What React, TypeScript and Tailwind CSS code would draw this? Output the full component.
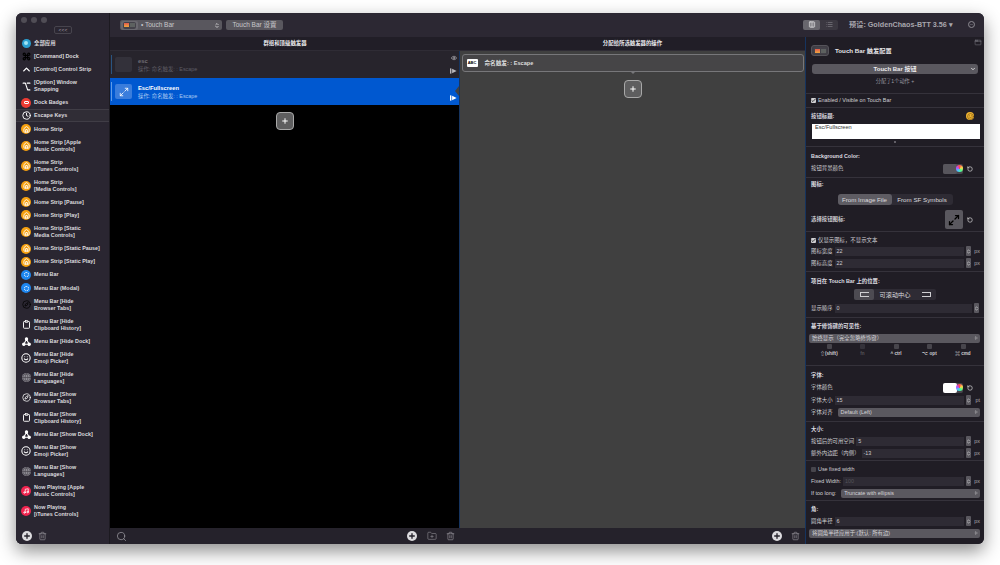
import type { ReactNode } from 'react';
import { Command, ChevronUp, Option, Clock, Home, Compass, Clipboard, Smile, Globe, Music, Plus, Trash2, Search, FolderPlus, Eye, Maximize2, RotateCcw, ChevronsUpDown, ChevronDown, Columns3, List, Minus, Check, AppWindow } from 'lucide-react';

const FONT = 'font-["Liberation_Sans","Noto_Sans_CJK_SC",sans-serif]';

type SideItem = { label: string[]; icon: ReactNode };

const homeIcon = (
  <span className="w-[10px] h-[10px] rounded-full bg-[#f5a00f] flex items-center justify-center">
    <Home className="w-[7px] h-[7px] text-white" strokeWidth={3} />
  </span>
);
const menuIcon = (
  <span className="w-[10px] h-[10px] rounded-full bg-[#1e87f0] flex items-center justify-center">
    <span className="w-[5px] h-[5px] rounded-full border border-dotted border-white" />
  </span>
);
const musicIcon = (
  <span className="w-[10px] h-[10px] rounded-full bg-[#f0244f] flex items-center justify-center">
    <Music className="w-[6px] h-[6px] text-white" strokeWidth={3} />
  </span>
);
const mono = (node: ReactNode) => <span className="text-white flex items-center justify-center">{node}</span>;
const dockIcon = (
  <svg viewBox="0 0 10 10" className="w-[9px] h-[9px]" fill="none" stroke="white" strokeWidth="1.2">
    <path d="M5 2.5 L2 8 M5 2.5 L8 8 M2 8 H8" />
    <circle cx="5" cy="2.2" r="1.3" fill="white" />
    <circle cx="2" cy="8" r="1.3" fill="white" />
    <circle cx="8" cy="8" r="1.3" fill="white" />
  </svg>
);
const langIcon = (
  <span className="w-[9px] h-[9px] rounded-full bg-[#8f8d94] flex items-center justify-center text-[#3a3840]">
    <Globe className="w-[9px] h-[9px]" strokeWidth={1.5} />
  </span>
);

const SIDE_ITEMS: SideItem[] = [
  {
    label: ['全部应用'],
    icon: (
      <span className="w-[9px] h-[9px] rounded-full bg-[#2a9fd0] flex items-center justify-center">
        <span className="w-[4px] h-[4px] rounded-full bg-[#9fe6f5]" />
      </span>
    ),
  },
  { label: ['[Command] Dock'], icon: <span className="text-black flex"><Command className="w-[9px] h-[9px]" strokeWidth={3} /></span> },
  { label: ['[Control] Control Strip'], icon: mono(<ChevronUp className="w-[11px] h-[11px]" strokeWidth={3} />) },
  { label: ['[Option] Window', 'Snapping'], icon: mono(<Option className="w-[9px] h-[9px]" strokeWidth={3} />) },
  {
    label: ['Dock Badges'],
    icon: (
      <span className="w-[10px] h-[10px] rounded-full bg-[#ee3b33] flex items-center justify-center">
        <span className="w-[5px] h-[3.5px] border border-white rounded-[1px]" />
      </span>
    ),
  },
  { label: ['Escape Keys'], icon: mono(<Clock className="w-[9px] h-[9px]" strokeWidth={2.5} />) },
  { label: ['Home Strip'], icon: homeIcon },
  { label: ['Home Strip [Apple', 'Music Controls]'], icon: homeIcon },
  { label: ['Home Strip', '[iTunes Controls]'], icon: homeIcon },
  { label: ['Home Strip', '[Media Controls]'], icon: homeIcon },
  { label: ['Home Strip [Pause]'], icon: homeIcon },
  { label: ['Home Strip [Play]'], icon: homeIcon },
  { label: ['Home Strip [Static', 'Media Controls]'], icon: homeIcon },
  { label: ['Home Strip [Static Pause]'], icon: homeIcon },
  { label: ['Home Strip [Static Play]'], icon: homeIcon },
  { label: ['Menu Bar'], icon: menuIcon },
  { label: ['Menu Bar (Modal)'], icon: menuIcon },
  { label: ['Menu Bar [Hide', 'Browser Tabs]'], icon: <span className="text-black flex"><Compass className="w-[9px] h-[9px]" strokeWidth={2} /></span> },
  { label: ['Menu Bar [Hide', 'Clipboard History]'], icon: mono(<Clipboard className="w-[9px] h-[9px]" strokeWidth={2.5} />) },
  { label: ['Menu Bar [Hide Dock]'], icon: dockIcon },
  { label: ['Menu Bar [Hide', 'Emoji Picker]'], icon: mono(<Smile className="w-[10px] h-[10px]" strokeWidth={2.5} />) },
  { label: ['Menu Bar [Hide', 'Languages]'], icon: langIcon },
  { label: ['Menu Bar [Show', 'Browser Tabs]'], icon: mono(<Compass className="w-[9px] h-[9px]" strokeWidth={2} />) },
  { label: ['Menu Bar [Show', 'Clipboard History]'], icon: mono(<Clipboard className="w-[9px] h-[9px]" strokeWidth={2.5} />) },
  { label: ['Menu Bar [Show Dock]'], icon: dockIcon },
  { label: ['Menu Bar [Show', 'Emoji Picker]'], icon: mono(<Smile className="w-[10px] h-[10px]" strokeWidth={2.5} />) },
  { label: ['Menu Bar [Show', 'Languages]'], icon: langIcon },
  { label: ['Now Playing [Apple', 'Music Controls]'], icon: musicIcon },
  { label: ['Now Playing', '[iTunes Controls]'], icon: musicIcon },
];

function SideRow({ item }: { item: SideItem }) {
  const active = item.label[0] === 'Escape Keys';
  const double = item.label.length > 1;
  return (
    <div className={`flex items-center gap-[3px] pl-[5px] shrink-0 ${double ? 'h-[20px]' : 'h-[13.2px]'} ${active ? 'bg-[#302d36] border-y border-[#403d46]' : ''}`}>
      <span className="w-[10px] flex justify-center shrink-0">{item.icon}</span>
      <div className="text-[5.4px] leading-[7px] font-bold text-[#dcdbdf] whitespace-nowrap">
        {item.label.map((l) => (
          <div key={l}>{l}</div>
        ))}
      </div>
    </div>
  );
}

function Sidebar() {
  return (
    <div className="w-[94px] shrink-0 bg-[#2a2631] flex flex-col border-r border-[#1c1a20] relative">
      <div className="absolute left-[5px] top-[4px] flex gap-[4px]">
        <span className="w-[6px] h-[6px] rounded-full bg-[#504d55]" />
        <span className="w-[6px] h-[6px] rounded-full bg-[#504d55]" />
        <span className="w-[6px] h-[6px] rounded-full bg-[#504d55]" />
      </div>
      <div className="absolute left-[38px] top-[13px] w-[18px] h-[8px] rounded-[2px] border border-[#47444d] text-[5px] leading-[6px] text-center text-[#a09ea6]">
        {'<<<'}
      </div>
      <div className="flex-1 min-h-0 overflow-hidden pt-[23.5px]">
        {SIDE_ITEMS.map((item) => (
          <SideRow key={item.label.join(' ')} item={item} />
        ))}
      </div>
      <div className="h-[17px] shrink-0 flex items-center gap-[6px] pl-[6px] bg-[#2a2631]">
        <PlusDisc />
        <Trash2 className="w-[9px] h-[10px] text-[#a5a3a9]" strokeWidth={1.5} />
      </div>
    </div>
  );
}

function PlusDisc() {
  return (
    <span className="w-[10px] h-[10px] rounded-full bg-[#dddcdf] flex items-center justify-center">
      <Plus className="w-[8px] h-[8px] text-[#25222b]" strokeWidth={4} />
    </span>
  );
}

function AddButton() {
  return (
    <div className="w-[18px] h-[18px] rounded-[4px] bg-[#5e5e5f] border border-[#a8a8a8] flex items-center justify-center">
      <Plus className="w-[8px] h-[8px] text-white" strokeWidth={3} />
    </div>
  );
}

function TouchBarThumb() {
  return (
    <span className="w-[13px] h-[7px] rounded-[2px] bg-[#44424a] flex items-center gap-[1px] px-[1px]">
      <span className="w-[5px] h-[4px] bg-gradient-to-b from-[#e2574c] to-[#eda73c]" />
      <span className="w-[5px] h-[4px] bg-[#5d6160]" />
    </span>
  );
}

function Toolbar() {
  return (
    <div className="h-[24px] shrink-0 flex items-center bg-[#2c2833]">
      <div className="ml-[10px] w-[102px] h-[10px] rounded-[2px] bg-[#59575e] flex items-center text-[6.5px] text-[#c8c7cb]">
        <span className="w-[17px] h-[9px] ml-[1px] rounded-[2px] bg-[#6a686f] flex items-center justify-center">
          <TouchBarThumb />
        </span>
        <span className="ml-[3px] flex-1">• Touch Bar</span>
        <ChevronsUpDown className="w-[6px] h-[7px] mr-[2px] text-white" strokeWidth={2.5} />
      </div>
      <div className="ml-[4px] w-[57px] h-[10px] rounded-[2px] bg-[#59575e] text-[6.5px] leading-[10px] text-center text-[#c8c7cb]">
        Touch Bar 设置
      </div>
      <div className="ml-auto flex items-center">
        <div className="w-[35px] h-[10px] rounded-[2px] bg-[#3b3841] flex items-center">
          <span className="w-[17px] h-[10px] rounded-[2px] bg-[#68666d] flex items-center justify-center text-white">
            <Columns3 className="w-[8px] h-[7px]" strokeWidth={2} />
          </span>
          <span className="flex-1 flex justify-center text-[#8a888f]">
            <List className="w-[7px] h-[7px]" strokeWidth={2} />
          </span>
        </div>
        <span className="ml-[11px] mr-[15px] w-[104px] text-[7.2px] font-semibold text-[#a8a6ad] whitespace-nowrap">预设: GoldenChaos-BTT 3.56 ▾</span>
        <span className="mr-[9px] w-[7px] h-[7px] rounded-full border border-[#8d8b92] flex items-center justify-center text-[#8d8b92]">
          <Minus className="w-[5px] h-[5px]" strokeWidth={2} />
        </span>
      </div>
    </div>
  );
}

function DragGlyph({ className }: { className: string }) {
  return (
    <svg viewBox="0 0 8 6" className={`w-[7px] h-[6px] ${className}`} fill="currentColor">
      <rect x="0" y="0" width="1.6" height="6" />
      <path d="M2.4 0.4 L7.6 3 L2.4 5.6 Z" />
    </svg>
  );
}

function TriggerRow({ selected, title, sub }: { selected?: boolean; title: string; sub: string }) {
  return (
    <div className={`h-[27px] shrink-0 flex items-center relative ${selected ? 'bg-[#0058d0]' : 'bg-[#27242c]'}`}>
      <span className={`ml-[1px] w-[1px] h-[19px] ${selected ? 'bg-[#5d9be8]' : 'bg-[#2a5480]'}`} />
      <span className={`ml-[3px] w-[17px] h-[15px] rounded-[2px] flex items-center justify-center ${selected ? 'bg-[#3a7ddc]' : 'bg-[#33313a]'}`}>
        {selected && <Maximize2 className="w-[10px] h-[10px] text-white" strokeWidth={2} />}
      </span>
      <div className="ml-[6px]">
        <div className={`text-[5.8px] leading-[8px] font-bold ${selected ? 'text-white' : 'text-[#6f6d75]'}`}>{title}</div>
        <div className={`mt-[1px] text-[5.4px] leading-[7px] ${selected ? 'text-[#a9c8f2]' : 'text-[#5f5d65]'}`}>{sub}</div>
      </div>
      <div className="ml-auto mr-[2px] h-full flex flex-col items-center justify-between py-[4px] text-[#b8b7bb]">
        {selected ? <span className="h-[6px]" /> : <Eye className="w-[6px] h-[6px]" strokeWidth={2.5} />}
        <DragGlyph className={selected ? 'text-white' : 'text-[#b8b7bb]'} />
      </div>
      {selected && <span className="absolute right-0 top-[8px] w-0 h-0 border-y-[5px] border-y-transparent border-r-[4px] border-r-[#404040]" />}
    </div>
  );
}

function ColumnHeader({ children }: { children: ReactNode }) {
  return (
    <div className="h-[14px] shrink-0 bg-[#211e27] border-b border-[#2f2c35] text-center text-[5.4px] leading-[13px] font-bold text-[#ecebee]">
      {children}
    </div>
  );
}

function TriggerColumn() {
  return (
    <div className="w-[350px] shrink-0 flex flex-col">
      <ColumnHeader>群组和顶级触发器</ColumnHeader>
      <div className="flex-1 min-h-0 bg-black flex flex-col border-r border-[#16345f]">
        <TriggerRow title="esc" sub="操作: 命名触发: : Escape" />
        <TriggerRow selected title="Esc/Fullscreen" sub="操作: 命名触发: : Escape" />
        <div className="mt-[7px] flex justify-center">
          <AddButton />
        </div>
      </div>
      <div className="h-[16px] shrink-0 bg-[#25222b] flex items-center px-[6px] text-[#a5a3a9]">
        <Search className="w-[11px] h-[11px]" strokeWidth={1.5} />
        <span className="ml-auto flex items-center gap-[8px] mr-[-1px]">
          <PlusDisc />
          <FolderPlus className="ml-[1px] w-[12px] h-[10px]" strokeWidth={1.2} />
          <Trash2 className="w-[9px] h-[10px]" strokeWidth={1.5} />
        </span>
      </div>
    </div>
  );
}

function ActionColumn() {
  return (
    <div className="w-[346px] shrink-0 flex flex-col border-r border-[#16345f]">
      <ColumnHeader>分配给所选触发器的操作</ColumnHeader>
      <div className="flex-1 min-h-0 bg-[#404040] flex flex-col items-center pt-[3px]">
        <div className="w-[342px] h-[18px] shrink-0 rounded-[3px] border border-[#77777a] bg-[#464547] flex items-center relative">
          <span className="ml-[4px] w-[11px] h-[8px] bg-white rounded-[1px] text-[4px] leading-[8px] text-center font-bold text-black">ABC</span>
          <span className="ml-[7px] text-[5.6px] font-semibold text-[#dcdcdc]">命名触发: : Escape</span>
          <span className="absolute left-1/2 -bottom-[3px] -ml-[3px] w-0 h-0 border-x-[3px] border-x-transparent border-t-[3px] border-t-[#77777a]" />
        </div>
        <div className="mt-[8px] ml-[1px]">
          <AddButton />
        </div>
      </div>
      <div className="h-[16px] shrink-0 bg-[#25222b] flex items-center justify-end pr-[5px] gap-[9px] text-[#a5a3a9]">
        <PlusDisc />
        <Trash2 className="w-[9px] h-[10px]" strokeWidth={1.5} />
      </div>
    </div>
  );
}

function Section({ children, className = '' }: { children: ReactNode; className?: string }) {
  return <div className={`border-b border-[#35323b] px-[5px] flex flex-col shrink-0 ${className}`}>{children}</div>;
}

function Heading({ children }: { children: ReactNode }) {
  return <div className="h-[12px] text-[5.4px] leading-[12px] font-bold text-[#dddce0]">{children}</div>;
}

function Stepper() {
  return (
    <span className="w-[5px] h-[10px] shrink-0 rounded-[1px] bg-[#5a585f] flex items-center justify-center text-white">
      <ChevronsUpDown className="w-[5px] h-[7px]" strokeWidth={2.5} />
    </span>
  );
}

function NumberRow({ label, value, unit, dim }: { label: string; value: string; unit: string; dim?: boolean }) {
  return (
    <div className="h-[12px] flex items-center text-[5.4px] text-[#cfced2]">
      <span className="whitespace-nowrap mr-[2px]">{label}</span>
      <span className={`flex-1 h-[9px] bg-[#2e2b34] pl-[2px] leading-[9px] ${dim ? 'text-[#55535a]' : ''}`}>{value}</span>
      <span className="ml-[2px]"><Stepper /></span>
      {unit && <span className="w-[9px] mr-[-1px] text-right text-[#a9a8ad]">{unit}</span>}
    </div>
  );
}

function SelectRow({ text, label }: { text: string; label?: string }) {
  return (
    <div className={`h-[12px] flex items-center text-[5.4px] text-[#d5d4d8] ${label ? '' : 'ml-[-2px]'}`}>
      {label && <span className="whitespace-nowrap mr-[5px]">{label}</span>}
      <span className="flex-1 h-[9px] rounded-[2px] bg-[#5a585f] flex items-center pl-[3px] pr-[2px] mr-[-1px]">
        <span className="flex-1 whitespace-nowrap">{text}</span>
        <ChevronsUpDown className="w-[4px] h-[6px] text-white" strokeWidth={2.5} />
      </span>
    </div>
  );
}

function ColorRow({ label, swatch }: { label: string; swatch: string }) {
  return (
    <div className="h-[13px] flex items-center text-[5.4px] text-[#cfced2]">
      <span className="flex-1">{label}</span>
      <span className="w-[20px] h-[10px] rounded-[2px] bg-[#47454c] flex items-center">
        <span className={`w-[14px] h-[10px] rounded-[2px] ${swatch}`} />
        <span className="ml-[-1px] w-[7px] h-[7px] rounded-full bg-[conic-gradient(#ff4d4d,#ffd84d,#4dff88,#4dc3ff,#b44dff,#ff4d4d)]" />
      </span>
      <RotateCcw className="ml-[4px] mr-[6px] w-[6px] h-[6px] text-[#e5e5e5]" strokeWidth={2.5} />
    </div>
  );
}

function CheckBox({ on }: { on?: boolean }) {
  return (
    <span className={`w-[5px] h-[5px] rounded-[1px] shrink-0 flex items-center justify-center ${on ? 'bg-[#cfcfd2]' : 'bg-[#47454c]'}`}>
      {on && <Check className="w-[5px] h-[5px] text-[#222]" strokeWidth={4} />}
    </span>
  );
}

const MODIFIERS = ['⇧(shift)', 'fn', '^ ctrl', '⌥ opt', '⌘ cmd'];

function Inspector() {
  return (
    <div className="flex-1 min-w-0 bg-[#201d25] flex flex-col text-[5.4px] text-[#cfced2] overflow-hidden">
      <div className="h-[27px] shrink-0 flex items-center pl-[5px] relative">
        <span className="w-[18px] h-[11px] rounded-[3px] bg-[#3f3d44] border border-[#55535a] flex items-center justify-center">
          <TouchBarThumb />
        </span>
        <span className="ml-[6px] text-[6.2px] font-bold text-[#e6e5e8]">Touch Bar 触发配置</span>
        <AppWindow className="absolute right-[2px] top-[2px] w-[8px] h-[7px] text-[#8d8b92]" strokeWidth={1.5} />
      </div>
      <Section className="h-[30px]">
        <div className="h-[10px] rounded-[3px] bg-[#5a585f] flex items-center justify-center relative text-[6px] font-semibold text-[#ecebee] mx-[1px]">
          Touch Bar 按钮
          <ChevronDown className="absolute right-[2px] w-[6px] h-[6px] text-white" strokeWidth={3} />
        </div>
        <div className="mt-[3px] text-center text-[5.2px] leading-[8px] text-[#9a98a0]">分配了1个动作 +</div>
      </Section>
      <Section className="h-[14px] justify-center">
        <div className="flex items-center gap-[2px]">
          <CheckBox on />
          <span>Enabled / Visible on Touch Bar</span>
        </div>
      </Section>
      <Section className="h-[39px]">
        <div className="h-[16px] flex items-center justify-between pr-[5px]">
          <span className="font-bold text-[#dddce0]">按钮标题:</span>
          <span className="w-[8px] h-[8px] rounded-full bg-[#f2b632] flex items-center justify-center">
            <Smile className="w-[7px] h-[7px] text-[#6a4a10]" strokeWidth={2} />
          </span>
        </div>
        <div className="h-[15px] bg-white text-[#333] text-[5.6px] leading-[7px] pl-[3px] ml-[1px] mr-[-1px]">Esc/Fullscreen</div>
        <div className="mt-[2px] mx-auto w-[2px] h-[2px] rounded-full bg-[#77757c]" />
      </Section>
      <Section className="h-[31px] pt-[3px]">
        <Heading>Background Color:</Heading>
        <ColorRow label="按钮背景颜色" swatch="bg-[#57555c]" />
      </Section>
      <Section className="h-[54px]">
        <Heading>图标:</Heading>
        <div className="mt-[4px] self-center w-[115px] h-[11px] rounded-[3px] bg-[#2e2b34] flex items-center text-[6.2px] text-[#dcdbdf]">
          <span className="w-[54px] h-[11px] rounded-[3px] bg-[#5e5c63] leading-[11px] text-center">From Image File</span>
          <span className="flex-1 text-center">From SF Symbols</span>
        </div>
        <div className="mt-[5px] h-[19px] flex items-center">
          <span className="flex-1 font-semibold">选择按钮图标:</span>
          <span className="w-[18px] h-[19px] rounded-[2px] bg-[#5a585f] flex items-center justify-center">
            <Maximize2 className="w-[12px] h-[12px] text-black" strokeWidth={2.5} />
          </span>
          <RotateCcw className="ml-[4px] mr-[6px] w-[6px] h-[6px] text-[#e5e5e5]" strokeWidth={2.5} />
        </div>
      </Section>
      <Section className="h-[40px] pt-[3px]">
        <div className="h-[10px] flex items-center gap-[2px]">
          <CheckBox on />
          <span>仅显示图标，不显示文本</span>
        </div>
        <NumberRow label="图标宽度" value="22" unit="px" />
        <NumberRow label="图标高度" value="22" unit="px" />
      </Section>
      <Section className="h-[46px] pt-[3px]">
        <Heading>项目在 Touch Bar 上的位置:</Heading>
        <div className="mt-[2px] self-center w-[82px] h-[11px] rounded-[2px] bg-[#2e2b34] flex items-center text-[6.2px] text-[#dcdbdf]">
          <span className="w-[20px] h-[11px] rounded-[2px] bg-[#4d4b52] flex items-center justify-center">
            <span className="w-[9px] h-[5px] border border-[#cfcfd2] border-r-0" />
          </span>
          <span className="flex-1 text-center">可滚动中心</span>
          <span className="w-[20px] flex items-center justify-center">
            <span className="w-[9px] h-[5px] border border-[#cfcfd2] border-l-0" />
          </span>
        </div>
        <div className="mt-[2px]">
          <NumberRow label="显示顺序" value="0" unit="" />
        </div>
      </Section>
      <Section className="h-[48px] pt-[2px]">
        <Heading>基于修饰键的可见性:</Heading>
        <SelectRow text="始终显示（完全忽略修饰键）" />
        <div className="flex justify-between pl-[6px] pr-[4px]">
          {MODIFIERS.map((m) => (
            <div key={m} className="w-[24px] flex flex-col items-center">
              <span className={`w-[5px] h-[5px] rounded-[1px] ${m === 'fn' ? 'bg-[#34323a]' : 'bg-[#47454c]'}`} />
              <span className={`mt-[2px] text-[4.6px] leading-[6px] font-bold ${m === 'fn' ? 'text-[#55535a]' : 'text-[#cfced2]'}`}>{m}</span>
            </div>
          ))}
        </div>
      </Section>
      <Section className="h-[56px] pt-[3px]">
        <Heading>字体:</Heading>
        <ColorRow label="字体颜色" swatch="bg-white" />
        <NumberRow label="字体大小" value="15" unit="pt" />
        <SelectRow label="字体对齐" text="Default (Left)" />
      </Section>
      <Section className="h-[39px] pt-[1px]">
        <Heading>大小:</Heading>
        <NumberRow label="按钮后的可用空间" value="5" unit="px" />
        <NumberRow label="额外内边距（内侧）" value="-13" unit="px" />
      </Section>
      <Section className="h-[40px] pt-[2px]">
        <div className="h-[12px] flex items-center gap-[2px]">
          <CheckBox />
          <span>Use fixed width</span>
        </div>
        <NumberRow label="Fixed Width:" value="100" unit="px" dim />
        <SelectRow label="If too long:" text="Truncate with ellipsis" />
      </Section>
      <div className="px-[5px] pt-[2px] flex flex-col">
        <Heading>角:</Heading>
        <NumberRow label="圆角半径" value="6" unit="px" />
        <SelectRow text="将圆角半径应用于:(默认: 所有边)" />
      </div>
    </div>
  );
}

export default function App() {
  return (
    <div className={`w-[1000px] h-[565px] bg-white pt-[13px] pl-[16px] overflow-hidden ${FONT}`}>
      <div className="w-[968px] h-[531px] rounded-[6px] overflow-hidden flex bg-[#2a2631] shadow-[0_7px_18px_rgba(0,0,0,0.45)]">
        <Sidebar />
        <div className="flex-1 min-w-0 flex flex-col">
          <Toolbar />
          <div className="flex-1 min-h-0 flex">
            <TriggerColumn />
            <ActionColumn />
            <Inspector />
          </div>
        </div>
      </div>
    </div>
  );
}
